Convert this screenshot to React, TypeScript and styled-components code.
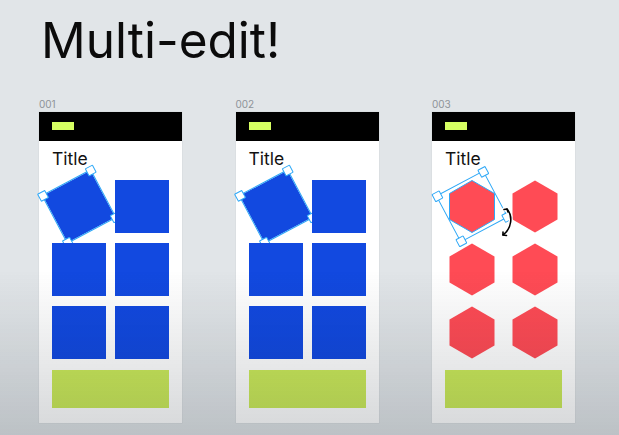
import styled, { createGlobalStyle } from 'styled-components';

const GlobalStyle = createGlobalStyle`
    html, body {
        margin: 0;
        padding: 0;
        width: 619px;
        height: 435px;
        overflow: hidden;
        background: #e1e5e8;
        font-family: Inter, "Noto Sans", sans-serif;
    }
    body::after {
        content: '';
        position: fixed;
        inset: 0;
        pointer-events: none;
        background: linear-gradient(to bottom, rgba(0, 0, 0, 0) 0%, rgba(0, 0, 0, 0) 62%, rgba(10, 20, 30, 0.17) 100%);
    }
`;

const BLUE = '#1249e0';
const RED = '#ff4b55';
const SELECT = '#2ea8f7';

const Page = styled.main`
    padding: 16px 0 0 39px;
`;

const Heading = styled.h1`
    margin: 0 0 34px 2px;
    font-size: 49.5px;
    line-height: 48px;
    font-weight: 400;
    color: #0b0b0b;
`;

const Frames = styled.div`
    display: grid;
    grid-template-columns: repeat(3, 143px);
    column-gap: 53.5px;
`;

const FrameLabel = styled.div`
    font-size: 10px;
    line-height: 12px;
    color: #8e9398;
    margin-bottom: 2px;
`;

const Frame = styled.section`
    position: relative;
    width: 143px;
    height: 311px;
    background: #fff;
    box-shadow: 0 0 0 0.5px #d5d9dc;
    display: flex;
    flex-direction: column;
`;

const Header = styled.div`
    height: 29px;
    background: #000;
    padding: 10px 0 0 13px;
    box-sizing: border-box;
`;

const Pill = styled.div`
    width: 22px;
    height: 8px;
    background: #d6ff62;
`;

const Body = styled.div`
    padding: 8px 13px 15px 13px;
    display: flex;
    flex-direction: column;
`;

const Title = styled.div`
    font-size: 17.5px;
    line-height: 20px;
    color: #111;
    margin-bottom: 11px;
`;

const Grid = styled.div`
    display: grid;
    grid-template-columns: 54px 54px;
    grid-auto-rows: 53px;
    column-gap: 9px;
    row-gap: 10px;
`;

const Cell = styled.div`
    position: relative;
    display: flex;
    align-items: center;
    justify-content: center;
`;

const Square = styled.div<{ $selected?: boolean }>`
    position: relative;
    width: 54px;
    height: 53px;
    background: ${BLUE};
    transform: ${p => (p.$selected ? 'rotate(-28deg)' : 'none')};
    outline: ${p => (p.$selected ? `1.5px solid ${SELECT}` : 'none')};
`;

const SelectBox = styled.div`
    position: absolute;
    left: 0;
    top: 0;
    width: 54px;
    height: 53px;
    border: 1px solid ${SELECT};
    box-sizing: border-box;
    transform: rotate(-28deg);
`;

const Handle = styled.span<{ $x: number; $y: number }>`
    position: absolute;
    left: ${p => p.$x}%;
    top: ${p => p.$y}%;
    width: 6.5px;
    height: 6.5px;
    background: #fff;
    border: 1px solid ${SELECT};
    border-radius: 1px;
    transform: translate(-50%, -50%);
`;

const Button = styled.div`
    margin-top: 11px;
    height: 38px;
    background: #cbea5a;
`;

const Cursor = styled.svg`
    position: absolute;
    left: 66px;
    top: 94px;
`;

const Handles = () => (
    <>
        <Handle $x={0} $y={0} />
        <Handle $x={100} $y={0} />
        <Handle $x={100} $y={100} />
        <Handle $x={0} $y={100} />
    </>
);

const Hexagon = ({ outlined }: { outlined?: boolean }) => (
    <svg width="46" height="53" viewBox="0 0 46 53">
        <polygon
            points="23,0.5 45.5,13.5 45.5,39.5 23,52.5 0.5,39.5 0.5,13.5"
            fill={RED}
            stroke={outlined ? SELECT : 'none'}
            strokeWidth="1"
        />
    </svg>
);

const RotateCursor = () => (
    <Cursor width="18" height="34" viewBox="0 0 18 34">
        <g fill="none" strokeLinecap="round" strokeLinejoin="round">
            <g stroke="#fff" strokeWidth="4">
                <path d="M9 3 C 15 10, 14 22, 5 29" />
                <path d="M6 3.5 L9 3 L10 6" />
                <path d="M5 26 L5 29 L8.5 29.5" />
            </g>
            <g stroke="#000" strokeWidth="1.6">
                <path d="M9 3 C 15 10, 14 22, 5 29" />
                <path d="M6 3.5 L9 3 L10 6" />
                <path d="M5 26 L5 29 L8.5 29.5" />
            </g>
        </g>
    </Cursor>
);

type Variant = 'square' | 'hex';

const frames: { label: string; variant: Variant }[] = [
    { label: '001', variant: 'square' },
    { label: '002', variant: 'square' },
    { label: '003', variant: 'hex' },
];

const App = () => {
    return (
        <Page>
            <GlobalStyle />
            <Heading>Multi-edit!</Heading>
            <Frames>
                {frames.map(f => (
                    <div key={f.label}>
                        <FrameLabel>{f.label}</FrameLabel>
                        <Frame>
                            <Header>
                                <Pill />
                            </Header>
                            <Body>
                                <Title>Title</Title>
                                <Grid>
                                    {[0, 1, 2, 3, 4, 5].map(i => (
                                        <Cell key={i}>
                                            {f.variant === 'square' ? (
                                                <Square $selected={i === 0}>
                                                    {i === 0 && <Handles />}
                                                </Square>
                                            ) : (
                                                <>
                                                    <Hexagon outlined={i === 0} />
                                                    {i === 0 && (
                                                        <SelectBox>
                                                            <Handles />
                                                        </SelectBox>
                                                    )}
                                                </>
                                            )}
                                        </Cell>
                                    ))}
                                </Grid>
                                <Button />
                            </Body>
                            {f.variant === 'hex' && <RotateCursor />}
                        </Frame>
                    </div>
                ))}
            </Frames>
        </Page>
    );
};

export default App;
